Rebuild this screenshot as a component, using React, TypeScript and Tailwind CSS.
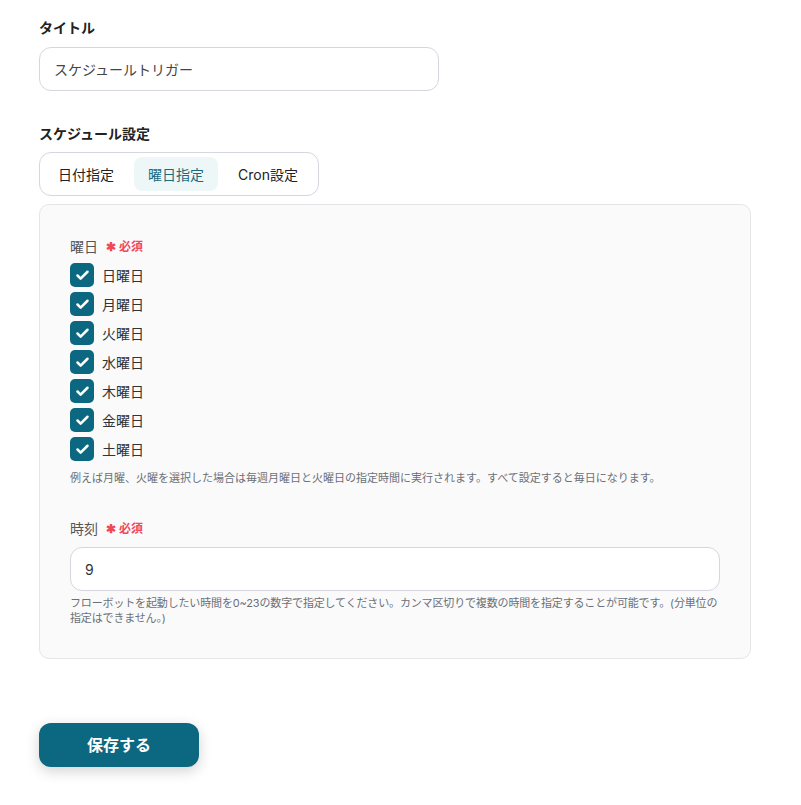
import React, { useState } from 'react';
import { Check } from 'lucide-react';

const days = ['日曜日', '月曜日', '火曜日', '水曜日', '木曜日', '金曜日', '土曜日'];
const tabs = ['日付指定', '曜日指定', 'Cron設定'];

const Required: React.FC = () => (
  <span className="ml-2 text-[12px] font-bold text-[#f0475a]">
    <span className="mr-[3px]">✱</span>必須
  </span>
);

export default function App() {
  const [tab, setTab] = useState(1);
  const [checked, setChecked] = useState<boolean[]>(days.map(() => true));

  return (
    <div className="min-h-[805px] bg-white px-[39px] pt-[18px] text-[#333] font-['Inter','Noto_Sans_CJK_JP',sans-serif]">
      {/* タイトル */}
      <div className="text-[14px] leading-5 font-bold text-[#222]">タイトル</div>
      <input
        className="mt-[9px] h-[44px] w-[400px] rounded-[12px] border border-[#d4d7dd] bg-white px-[14px] text-[14px] text-[#444] outline-none"
        defaultValue="スケジュールトリガー"
      />

      {/* スケジュール設定 */}
      <div className="mt-[33px] text-[14px] leading-5 font-bold text-[#222]">スケジュール設定</div>
      <div className="mt-[8px] flex h-[44px] w-[280px] items-center gap-[6px] rounded-[12px] border border-[#d4d7dd] bg-white p-[4px]">
        {tabs.map((t, i) => (
          <button
            key={t}
            onClick={() => setTab(i)}
            className={
              i === tab
                ? 'h-[34px] rounded-[8px] bg-[#eef7f8] px-[14px] text-[14px] text-[#1b6a7e]'
                : 'h-[34px] rounded-[8px] px-[14px] text-[14px] text-[#222]'
            }
          >
            {t}
          </button>
        ))}
      </div>

      <div className="mt-[8px] w-[712px] rounded-[10px] border border-[#e3e5e8] bg-[#fafafa] px-[30px] pt-[32px] pb-[32px]">
        <div className="flex items-center text-[14px] leading-5 text-[#555]">
          曜日
          <Required />
        </div>
        <div className="mt-[6px] flex flex-col gap-[5px]">
          {days.map((d, i) => (
            <label key={d} className="flex h-[24px] cursor-pointer items-center gap-[8px]">
              <span
                onClick={() => setChecked(checked.map((c, j) => (j === i ? !c : c)))}
                className={
                  checked[i]
                    ? 'flex h-[24px] w-[24px] items-center justify-center rounded-[5px] bg-[#0c6880]'
                    : 'flex h-[24px] w-[24px] items-center justify-center rounded-[5px] border border-[#c7cbd1] bg-white'
                }
              >
                {checked[i] && <Check size={15} strokeWidth={4} className="text-white" />}
              </span>
              <span className="text-[14px] text-[#333]">{d}</span>
            </label>
          ))}
        </div>
        <p className="mt-[10px] text-[11px] leading-[15px] text-[#6b7078]">
          例えば月曜、火曜を選択した場合は毎週月曜日と火曜日の指定時間に実行されます。すべて設定すると毎日になります。
        </p>

        <div className="mt-[33px] flex items-center text-[14px] leading-5 text-[#555]">
          時刻
          <Required />
        </div>
        <input
          className="mt-[8px] h-[44px] w-full rounded-[12px] border border-[#d4d7dd] bg-white px-[14px] text-[14px] text-[#333] outline-none"
          defaultValue="9"
        />
        <p className="mt-[5px] text-[11px] leading-[15px] tracking-[-0.15px] text-[#6b7078]">
          フローボットを起動したい時間を0~23の数字で指定してください。カンマ区切りで複数の時間を指定することが可能です。(分単位の指定はできません。)
        </p>
      </div>

      <button className="mt-[64px] h-[44px] w-[160px] rounded-[12px] bg-[#0c6880] text-[16px] font-bold text-white shadow-[0_4px_14px_rgba(0,0,0,0.18)]">
        保存する
      </button>
    </div>
  );
}
